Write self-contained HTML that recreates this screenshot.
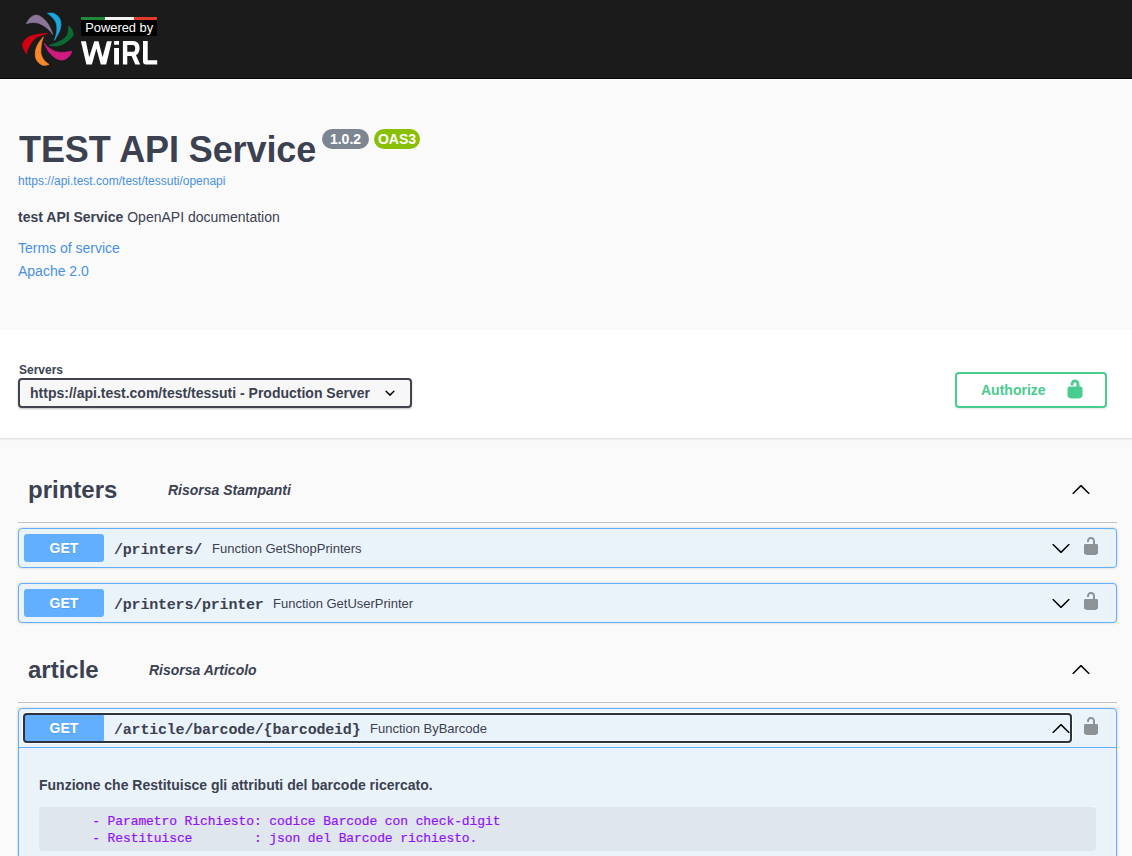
<!DOCTYPE html>
<html><head><meta charset="utf-8">
<style>
*{box-sizing:border-box;margin:0;padding:0}
html,body{width:1132px;height:856px;overflow:hidden;background:#fafafa;font-family:"Liberation Sans",sans-serif;color:#3b4151}
.a{position:absolute;white-space:nowrap}
#topbar{position:absolute;left:0;top:0;width:1132px;height:78px;background:#1b1b1b}
#tbl1{position:absolute;left:0;top:78px;width:1132px;height:1px;background:#070707}
#tbl2{position:absolute;left:0;top:79px;width:1132px;height:1px;background:#fff}
.title{font-size:36px;line-height:36px;font-weight:700;color:#3b4151;letter-spacing:-0.1px}
.badge{position:absolute;height:20px;border-radius:10px;color:#fff;font-weight:700;font-size:14px;line-height:20px;text-align:center}
.link{color:#4990e2}
#scheme{position:absolute;left:-10px;top:330px;width:1152px;height:108px;background:#fff;box-shadow:0 1px 2px 0 rgba(0,0,0,.15)}
.tagname{font-size:24px;line-height:24px;font-weight:700;color:#3b4151}
.tagdesc{font-size:14px;line-height:14px;font-weight:700;font-style:italic;color:#3b4151}
.tagline{position:absolute;left:18px;width:1099px;height:1px;background:rgba(59,65,81,.3)}
.opb{position:absolute;left:18px;width:1099px;border:1px solid #61affe;border-radius:4px;background:#ebf3fa;box-shadow:0 0 3px rgba(0,0,0,.19)}
.meth{position:absolute;left:5px;top:5px;width:80px;height:28px;border-radius:3px;background:#61affe;color:#fff;font-size:14px;font-weight:700;text-align:center;line-height:28px;text-shadow:0 1px 0 rgba(0,0,0,.1)}
.path{font-family:"Liberation Mono",monospace;font-weight:700;font-size:15px;letter-spacing:-0.2px;line-height:16px;color:#3b4151}
.fdesc{font-size:13px;line-height:13px;color:#3b4151}
</style></head><body>
<div id="topbar">
  <svg class="a" style="left:18px;top:8px" width="60" height="60" viewBox="0 0 856 856">
<g stroke-width="10" stroke-linejoin="round">
<path fill="#8b7699" stroke="#8b7699" d="M117,225 C127,211 154,160 175,140 C196,120 221,105 245,102 C269,99 296,108 321,122 C346,136 375,162 397,187 C419,212 438,242 455,274 C472,306 489,362 496,379 C489,370 474,346 455,327 C436,308 406,280 379,262 C352,244 321,225 292,216 C263,207 233,206 204,207 C175,208 132,222 117,225 Z"/>
<path fill="#1aa7df" stroke="#1aa7df" d="M421,76 C434,76 477,68 502,76 C527,84 555,103 573,122 C591,141 602,167 608,192 C614,217 613,246 608,274 C603,302 593,331 578,362 C563,393 530,444 520,461 C525,444 543,393 549,362 C555,331 557,301 555,274 C553,247 549,221 538,198 C527,175 510,154 491,134 C472,114 433,86 421,76 Z"/>
<path fill="#0b6b35" stroke="#0b6b35" d="M724,257 C731,265 754,283 765,303 C776,323 787,360 788,379 C789,398 784,399 771,415 C758,431 732,454 707,473 C682,492 648,514 619,526 C590,538 561,542 532,543 C503,544 459,534 444,532 C464,525 527,506 561,491 C595,476 624,464 648,444 C672,424 694,405 707,374 C720,343 721,276 724,257 Z"/>
<path fill="#d11a7f" stroke="#d11a7f" d="M771,616 C765,627 752,664 736,683 C720,702 700,720 678,730 C656,740 631,745 607,742 C583,739 559,730 532,712 C505,694 471,666 444,631 C417,596 383,524 371,502 C383,514 417,552 444,572 C471,592 503,609 532,619 C561,629 590,633 619,634 C648,635 682,628 707,625 C732,622 760,618 771,616 Z"/>
<path fill="#f7882a" stroke="#f7882a" d="M443,806 C430,808 387,823 362,818 C337,813 310,796 292,777 C274,758 258,736 251,707 C244,678 244,636 251,602 C258,568 274,534 292,502 C310,470 350,427 362,412 C358,425 344,463 338,491 C332,519 328,548 327,578 C326,608 323,643 332,672 C341,701 360,731 379,753 C398,775 432,797 443,806 Z"/>
<path fill="#d20010" stroke="#d20010" d="M122,657 C112,636 65,568 64,532 C63,496 89,462 117,438 C145,414 182,399 233,386 C284,373 389,366 420,362 C394,372 301,398 262,421 C223,444 207,474 187,502 C167,530 151,564 140,590 C129,616 125,646 122,657 Z"/>
</g>
</svg>
  <div class="a" style="left:81px;top:17px;width:24px;height:3px;background:#1f8a3a"></div>
  <div class="a" style="left:105px;top:17px;width:29px;height:3px;background:#f4f4f4"></div>
  <div class="a" style="left:134px;top:17px;width:23px;height:3px;background:#e5392b"></div>
  <div class="a" style="left:81px;top:20px;width:76px;height:16px;background:#000"></div>
  <svg class="a" style="left:81px;top:17px" width="80" height="52">
    <text x="4.2" y="14.9" font-family="Liberation Sans" font-size="12.6" fill="#fff" textLength="68" lengthAdjust="spacingAndGlyphs">Powered by</text>
  </svg>
  <svg class="a" style="left:0;top:0" width="170" height="78" viewBox="0 0 170 78">
    <path fill="#fff" fill-rule="evenodd" d="M80.9,41.2 L85.9,41.2 L89.2,57.2 L94.3,41.2 L98.5,41.2 L102.6,57.2 L106.9,41.2 L111.8,41.2 L106.2,64.6 L100.8,64.6 L96.4,48.6 L91.9,64.6 L86.4,64.6 Z
    M114.1,41.1 h4.9 v3.7 h-4.9 Z M114.1,47.9 h4.9 v16.7 h-4.9 Z
    M122.9,41.1 H133 C137.5,41.1 139.6,44 139.6,48.2 C139.6,51.6 138,54 136,55.3 L140.2,64.6 H135.3 L131.6,56 H127.3 V64.6 H122.9 Z M127.3,45 H132.6 C134.5,45 135.2,46.5 135.2,48.4 C135.2,50.4 134.4,51.8 132.6,51.8 H127.3 Z
    M143,41.1 H147.7 V60.3 H157.2 V64.6 H146 C144,64.6 143,63.6 143,61.6 Z"/>
  </svg>
</div>
<div id="tbl1"></div><div id="tbl2"></div>

<div class="a title" style="left:19px;top:132px">TEST API Service</div>
<div class="badge" style="left:322px;top:129px;width:47px;background:#7d8492">1.0.2</div>
<div class="badge" style="left:374px;top:129px;width:46px;background:#89bf04">OAS3</div>
<div class="a link" style="left:18px;top:175px;font-size:12px;line-height:12px">https://api.test.com/test/tessuti/openapi</div>
<div class="a" style="left:18px;top:210px;font-size:14px;line-height:14px"><b>test API Service</b> OpenAPI documentation</div>
<div class="a link" style="left:18px;top:241px;font-size:14px;line-height:14px">Terms of service</div>
<div class="a link" style="left:18px;top:264px;font-size:14px;line-height:14px">Apache 2.0</div>

<div id="scheme"></div>
<div class="a" style="left:19px;top:364px;font-size:12px;line-height:12px;font-weight:700">Servers</div>
<div class="a" style="left:18px;top:378px;width:394px;height:30px;border:2px solid #41444e;border-radius:4px;background:#f7f7f7;box-shadow:0 1px 2px 0 rgba(0,0,0,.25)"></div>
<div class="a" style="left:30px;top:386px;font-size:14px;line-height:14px;font-weight:700;color:#3b4151">https://api.test.com/test/tessuti - Production Server</div>
<svg class="a" style="left:380px;top:383px" width="20" height="20" viewBox="0 0 20 20"><path fill="#000" d="M13.418 7.859a.695.695 0 0 1 .978 0 .68.68 0 0 1 0 .969l-3.908 3.83a.697.697 0 0 1-.979 0l-3.908-3.83a.68.68 0 0 1 0-.969.695.695 0 0 1 .978 0L10 11l3.418-3.141z"/></svg>

<div class="a" style="left:955px;top:372px;width:152px;height:36px;border:2px solid #49cc90;border-radius:4px;box-shadow:0 1px 2px rgba(0,0,0,.1)"></div>
<div class="a" style="left:981px;top:383px;font-size:14px;line-height:14px;font-weight:700;color:#49cc90">Authorize</div>
<svg class="a" style="left:1065px;top:379px" width="20" height="20" viewBox="0 0 20 20"><path fill="#49cc90" stroke="#49cc90" d="M15.8 8H14V5.6C14 2.703 12.665 1 10 1 7.334 1 6 2.703 6 5.6V6h2v-.801C8 3.754 8.797 3 10 3c1.203 0 2 .754 2 2.199V8H4c-.553 0-1 .646-1 1.199V17c0 .549.428 1.139.951 1.307l1.197.387C5.672 18.861 6.55 19 7.1 19h5.8c.549 0 1.428-.139 1.951-.307l1.196-.387c.524-.167.953-.757.953-1.306V9.199C17 8.646 16.352 8 15.8 8z"/></svg>

<!-- printers tag -->
<div class="a tagname" style="left:28px;top:478px">printers</div>
<div class="a tagdesc" style="left:168px;top:483px">Risorsa Stampanti</div>
<svg class="a" style="left:1071px;top:479px" width="20" height="20" viewBox="0 0 20 20"><path d="M17.418 14.908c.272.268.709.268.979 0s.27-.701 0-.969l-7.908-7.83c-.27-.268-.707-.268-.979 0l-7.908 7.83c-.27.268-.27.701 0 .969.271.268.709.268.979 0L10 7.767l7.418 7.141z"/></svg>
<div class="tagline" style="top:522px"></div>

<div class="opb" style="top:528px;height:40px">
  <div class="meth">GET</div>
</div>
<div class="a path" style="left:114px;top:543px">/printers/</div>
<div class="a fdesc" style="left:212px;top:542px">Function GetShopPrinters</div>

<div class="opb" style="top:583px;height:40px">
  <div class="meth">GET</div>
</div>
<div class="a path" style="left:114px;top:598px">/printers/printer</div>
<div class="a fdesc" style="left:273px;top:597px">Function GetUserPrinter</div>

<!-- article tag -->
<div class="a tagname" style="left:28px;top:658px">article</div>
<div class="a tagdesc" style="left:149px;top:663px">Risorsa Articolo</div>
<svg class="a" style="left:1071px;top:659px" width="20" height="20" viewBox="0 0 20 20"><path d="M17.418 14.908c.272.268.709.268.979 0s.27-.701 0-.969l-7.908-7.83c-.27-.268-.707-.268-.979 0l-7.908 7.83c-.27.268-.27.701 0 .969.271.268.709.268.979 0L10 7.767l7.418 7.141z"/></svg>
<div class="tagline" style="top:702px"></div>

<div class="opb" style="top:708px;height:160px">
  <div class="meth">GET</div>
  <div class="a" style="left:0;top:38px;width:1097px;height:1px;background:#61affe"></div>
  <div class="a" style="left:20px;top:98px;width:1057px;height:44px;border-radius:4px;background:rgba(0,0,0,.05)"></div>
</div>
<div class="a path" style="left:114px;top:723px">/article/barcode/{barcodeid}</div>
<div class="a fdesc" style="left:370px;top:722px">Function ByBarcode</div>
<div class="a" style="left:23px;top:713px;width:1049px;height:30px;border:2px solid #30323f;border-radius:4px;box-shadow:0 0 0 1px #fff"></div>
<div class="a" style="left:39px;top:778px;font-size:14px;line-height:14px;font-weight:700">Funzione che Restituisce gli attributi del barcode ricercato.</div>
<pre class="a" style="white-space:pre;left:46px;top:813px;font-family:'Liberation Mono',monospace;font-size:13px;line-height:17px;font-weight:400;letter-spacing:-0.1px;color:#9012fe;-webkit-text-stroke:0.2px #9012fe">      - Parametro Richiesto: codice Barcode con check-digit
      - Restituisce        : json del Barcode richiesto.</pre>

<!-- opblock icons -->
<svg class="a" style="left:1051px;top:538px" width="20" height="20" viewBox="0 0 20 20"><path d="M17.418 6.109c.272-.268.709-.268.979 0s.271.701 0 .969l-7.908 7.83c-.27.268-.707.268-.979 0l-7.908-7.83c-.27-.268-.27-.701 0-.969.271-.268.709-.268.979 0L10 13.25l7.418-7.141z"/></svg>
<svg class="a" style="left:1081px;top:536px" width="20" height="20" viewBox="0 0 20 20"><path fill="rgba(0,0,0,.4)" d="M15.8 8H14V5.6C14 2.703 12.665 1 10 1 7.334 1 6 2.703 6 5.6V6h2v-.801C8 3.754 8.797 3 10 3c1.203 0 2 .754 2 2.199V8H4c-.553 0-1 .646-1 1.199V17c0 .549.428 1.139.951 1.307l1.197.387C5.672 18.861 6.55 19 7.1 19h5.8c.549 0 1.428-.139 1.951-.307l1.196-.387c.524-.167.953-.757.953-1.306V9.199C17 8.646 16.352 8 15.8 8z"/></svg>
<svg class="a" style="left:1051px;top:593px" width="20" height="20" viewBox="0 0 20 20"><path d="M17.418 6.109c.272-.268.709-.268.979 0s.271.701 0 .969l-7.908 7.83c-.27.268-.707.268-.979 0l-7.908-7.83c-.27-.268-.27-.701 0-.969.271-.268.709-.268.979 0L10 13.25l7.418-7.141z"/></svg>
<svg class="a" style="left:1081px;top:591px" width="20" height="20" viewBox="0 0 20 20"><path fill="rgba(0,0,0,.4)" d="M15.8 8H14V5.6C14 2.703 12.665 1 10 1 7.334 1 6 2.703 6 5.6V6h2v-.801C8 3.754 8.797 3 10 3c1.203 0 2 .754 2 2.199V8H4c-.553 0-1 .646-1 1.199V17c0 .549.428 1.139.951 1.307l1.197.387C5.672 18.861 6.55 19 7.1 19h5.8c.549 0 1.428-.139 1.951-.307l1.196-.387c.524-.167.953-.757.953-1.306V9.199C17 8.646 16.352 8 15.8 8z"/></svg>
<svg class="a" style="left:1051px;top:718px" width="20" height="20" viewBox="0 0 20 20"><path d="M17.418 14.908c.272.268.709.268.979 0s.27-.701 0-.969l-7.908-7.83c-.27-.268-.707-.268-.979 0l-7.908 7.83c-.27.268-.27.701 0 .969.271.268.709.268.979 0L10 7.767l7.418 7.141z"/></svg>
<svg class="a" style="left:1081px;top:716px" width="20" height="20" viewBox="0 0 20 20"><path fill="rgba(0,0,0,.4)" d="M15.8 8H14V5.6C14 2.703 12.665 1 10 1 7.334 1 6 2.703 6 5.6V6h2v-.801C8 3.754 8.797 3 10 3c1.203 0 2 .754 2 2.199V8H4c-.553 0-1 .646-1 1.199V17c0 .549.428 1.139.951 1.307l1.197.387C5.672 18.861 6.55 19 7.1 19h5.8c.549 0 1.428-.139 1.951-.307l1.196-.387c.524-.167.953-.757.953-1.306V9.199C17 8.646 16.352 8 15.8 8z"/></svg>
</body></html>
